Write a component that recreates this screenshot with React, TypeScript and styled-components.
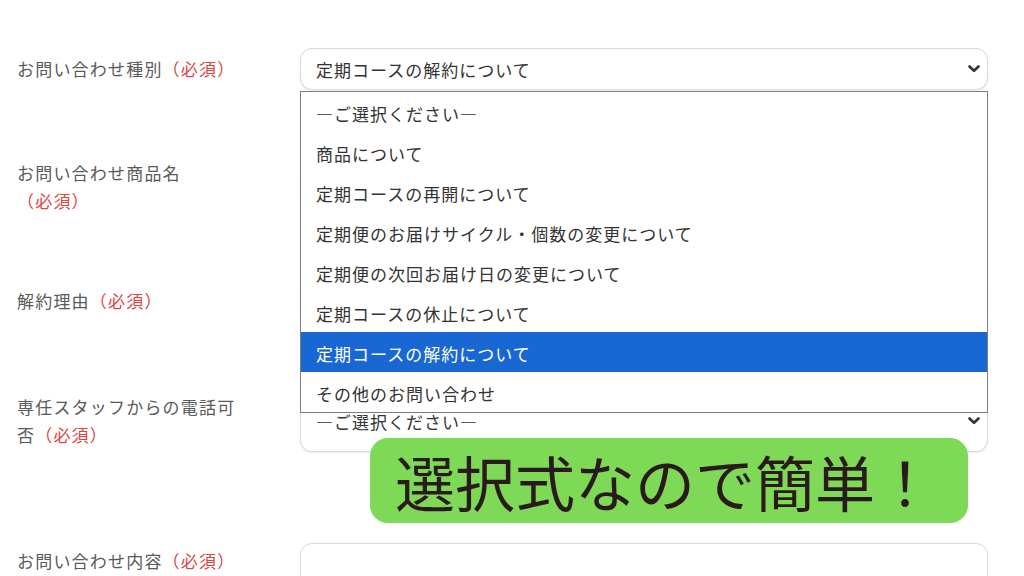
import styled, {createGlobalStyle} from "styled-components";

const GlobalStyle = createGlobalStyle`
    html, body {
        margin: 0;
        padding: 0;
        background: #ffffff;
        overflow: hidden;
    }
    body {
        font-family: "Noto Sans CJK JP", "Noto Sans", sans-serif;
        color: #333333;
        text-spacing-trim: space-all;
    }
`

const options = [
    "—ご選択ください—",
    "商品について",
    "定期コースの再開について",
    "定期便のお届けサイクル・個数の変更について",
    "定期便の次回お届け日の変更について",
    "定期コースの休止について",
    "定期コースの解約について",
    "その他のお問い合わせ",
]

const Chevron = () => (
    <svg width="14" height="10" viewBox="0 0 14 10">
        <path d="M2.5 2.5 L7 6.8 L11.5 2.5" fill="none" stroke="#333" strokeWidth="2.6" strokeLinecap="round"
              strokeLinejoin="round"/>
    </svg>
)

export default function App() {
    return (
        <Page>
            <GlobalStyle/>
            <Row $top={48}>
                <Label>お問い合わせ種別<Required>（必須）</Required></Label>
                <Select $height={42}>
                    <SelectText>定期コースの解約について</SelectText>
                    <Chevron/>
                </Select>
            </Row>
            <Row $top={69}>
                <Label>お問い合わせ商品名<Required>（必須）</Required></Label>
                <TextInput $height={42}/>
            </Row>
            <Row $top={65}>
                <Label>解約理由<Required>（必須）</Required></Label>
                <TextInput $height={42}/>
            </Row>
            <Row $top={68}>
                <Label>専任スタッフからの電話可否<Required>（必須）</Required></Label>
                <Select $height={62}>
                    <SelectText>—ご選択ください—</SelectText>
                    <Chevron/>
                </Select>
            </Row>
            <Row $top={91} $alignTop>
                <Label $offset={4}>お問い合わせ内容<Required>（必須）</Required></Label>
                <TextInput $height={160}/>
            </Row>

            <OptionList>
                {options.map((o, i) => (
                    <OptionItem key={o} $selected={i === 6}>{o}</OptionItem>
                ))}
            </OptionList>

            <Callout>選択式なので簡単！</Callout>
        </Page>
    )
}

const Page = styled.div`
    position: relative;
    width: 1024px;
    height: 576px;
    padding-left: 17px;
    box-sizing: border-box;
    overflow: hidden;
`

const Row = styled.div<{ $top: number, $alignTop?: boolean }>`
    display: grid;
    grid-template-columns: 283px 688px;
    align-items: ${props => props.$alignTop ? "start" : "center"};
    margin-top: ${props => props.$top}px;
`

const Label = styled.div<{ $offset?: number }>`
    width: 228px;
    font-size: 17px;
    letter-spacing: 1.2px;
    line-height: 28px;
    color: #5a5a5a;
    padding-top: ${props => props.$offset ?? 0}px;
`

const Required = styled.span`
    color: #e0443f;
    white-space: nowrap;
`

const Select = styled.div<{ $height: number }>`
    height: ${props => props.$height}px;
    box-sizing: border-box;
    border: 1px solid #d9d9d9;
    border-radius: 12px;
    box-shadow: 0 1px 2px rgba(0, 0, 0, 0.08);
    display: flex;
    align-items: center;
    justify-content: space-between;
    padding: 0 6px 0 15px;
    background: #fff;
`

const SelectText = styled.span`
    font-size: 17px;
    letter-spacing: 1px;
    color: #333;
    font-feature-settings: "fwid";
`

const TextInput = styled.div<{ $height: number }>`
    height: ${props => props.$height}px;
    box-sizing: border-box;
    border: 1px solid #d9d9d9;
    border-radius: 12px;
    box-shadow: 0 1px 2px rgba(0, 0, 0, 0.08);
    background: #fff;
`

const OptionList = styled.div`
    position: absolute;
    left: 300px;
    top: 91px;
    width: 688px;
    box-sizing: border-box;
    border: 1px solid #7c7c7c;
    background: #fff;
`

const OptionItem = styled.div<{ $selected?: boolean }>`
    height: 40px;
    display: flex;
    align-items: center;
    padding: 3px 0 0 15px;
    box-sizing: border-box;
    font-size: 17px;
    letter-spacing: 1px;
    font-feature-settings: "fwid";
    color: ${props => props.$selected ? "#ffffff" : "#333333"};
    background: ${props => props.$selected ? "#1967d2" : "transparent"};
`

const Callout = styled.div`
    position: absolute;
    left: 370px;
    top: 438px;
    width: 598px;
    height: 85px;
    border-radius: 18px;
    background: #7ed957;
    display: flex;
    align-items: center;
    justify-content: center;
    padding-right: 8px;
    box-sizing: border-box;
    font-size: 60px;
    color: #2b1a1c;
`
